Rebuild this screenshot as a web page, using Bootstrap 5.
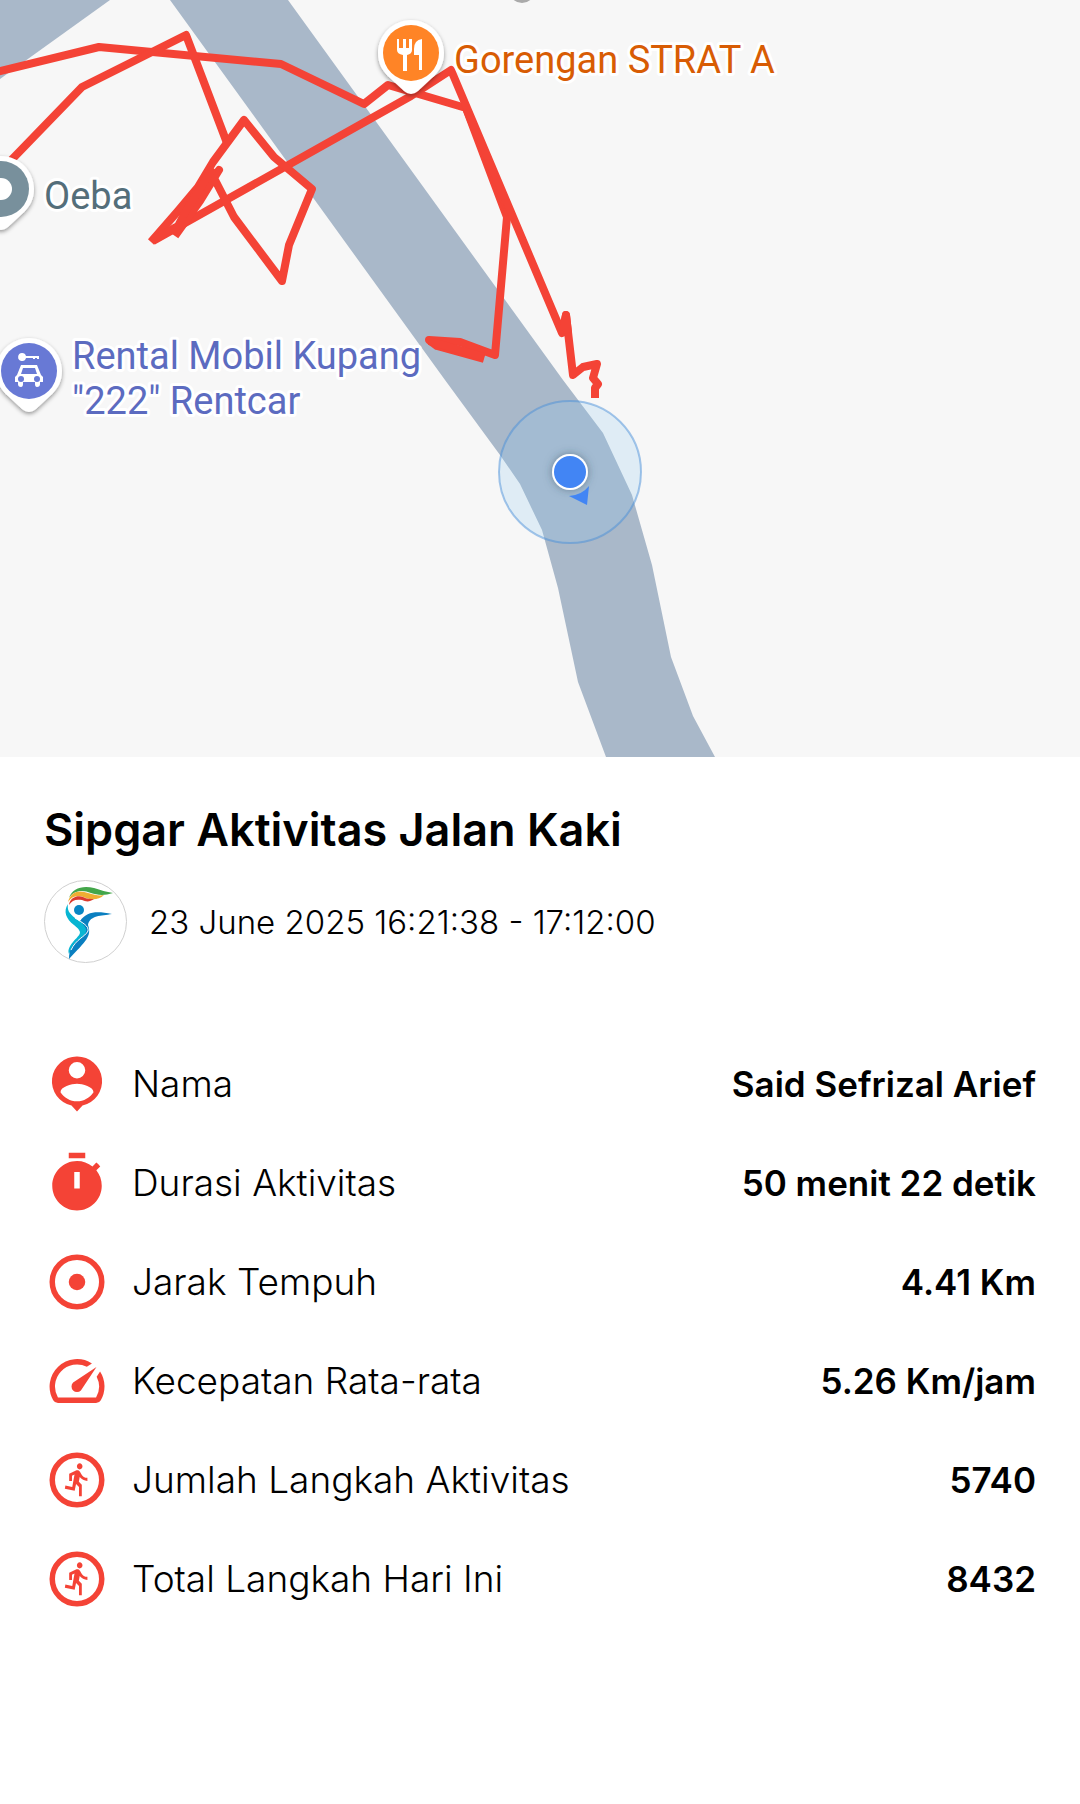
<!DOCTYPE html>
<html lang="id">
<head>
<meta charset="utf-8">
<meta name="viewport" content="width=device-width, initial-scale=1">
<title>Sipgar Aktivitas Jalan Kaki</title>
<link href="https://cdn.jsdelivr.net/npm/bootstrap@5.3.0/dist/css/bootstrap.min.css" rel="stylesheet">
<style>
  body { font-family: Inter, "Open Sans", sans-serif; color: #000; background: #fff; }
  .route-map { background: #f7f7f7; }
  .map-label { font-family: Roboto, sans-serif; font-size: 38px; paint-order: stroke; stroke: #fff; stroke-width: 6px; stroke-linejoin: round; }
  .activity { padding: 48px 44px; }
  .activity-title { font-size: 45px; line-height: 50px; font-weight: 600; margin-bottom: 25px; }
  .activity-meta { gap: 22px; margin-bottom: 88px; font-size: 33px; line-height: 40px; font-weight: 300; }
  .club-logo { width: 83px; height: 83px; }
  .stats { gap: 33px; }
  .stat-line { gap: 22px; font-size: 37px; line-height: 44px; }
  .stat-line dt { font-weight: 300; }
  .stat-line dd { font-size: 35px; font-weight: 600; }
  .stat-icon { width: 66px; height: 66px; fill: #f44336; }
</style>
<script src="https://cdn.jsdelivr.net/npm/bootstrap@5.3.0/dist/js/bootstrap.bundle.min.js" defer></script>
</head>
<body>
<svg class="route-map d-block w-100" viewBox="0 0 1080 757" role="img" aria-label="Peta rute jalan kaki">
  <defs>
    <filter id="pinShadow" x="-30%" y="-30%" width="160%" height="160%"><feDropShadow dx="0" dy="2" stdDeviation="2" flood-color="#000" flood-opacity=".4"/></filter>
    <filter id="dotShadow" x="-50%" y="-50%" width="200%" height="200%"><feDropShadow dx="0" dy="0" stdDeviation="4" flood-color="#345" flood-opacity=".5"/></filter>
    <path id="pin" d="M0-33C-18-33-33-18-33 0C-33 11-28 19-21 25L-7 38Q0 44 7 38L21 25C28 19 33 11 33 0C33-18 18-33 0-33z"/>
  </defs>
  <g fill="#a9b8c9">
    <path d="M0 0H110L0 79z"/>
    <path d="M170 0L445 380L500 455L520 484L542 530L558 588L578 682L606 757H715L693 716L671 657L652 565L632 495L603 433L563 380L288 0z"/>
  </g>
  <g fill="none" stroke="#f44336" stroke-width="8" stroke-linejoin="round">
    <path d="M-4 72L99 47L281 64L364 104L388 85L466 108L507 217L495 355L460 342L429 340L437 346L484 359"/>
    <path d="M466 108L510 215"/>
    <path d="M429 341L484 357"/>
    <path d="M-4 176L82 87L186 35L227 143"/>
    <path d="M153 241L411 96L451 70L562 333L566 315L573 375L583 367L597 364L593 378L598 384L595 388L595 398"/>
    <path d="M151 242L178 211L198 187L213 162L244 120L274 157L312 189L289 245L282 281L234 217L214 178L219 170L200 201L175 236"/>
    <path d="M153 240L178 226L196 192L215 172"/>
    <path d="M183 216L213 168"/>
    <path d="M563 331L566 315L568 333"/>
  </g>
  <circle cx="522" cy="-10" r="13" fill="#aaa"/>
  <g transform="translate(411 53)">
    <use href="#pin" fill="#fff" filter="url(#pinShadow)"/>
    <circle r="28" fill="#ff8426"/>
    <path fill="#fff" d="M-14-14h2v9h4v-9h3v9h3v-9h3v11q0 4-5 5v16h-4V2q-6-1-6-5zM11-14V17H8V2H3V-4Q3-13 11-14z"/>
  </g>
  <g transform="translate(1 189)">
    <use href="#pin" fill="#fff" filter="url(#pinShadow)"/>
    <circle r="28" fill="#78909c"/><circle r="11" fill="#fff"/>
  </g>
  <g transform="translate(29 371)">
    <use href="#pin" fill="#fff" filter="url(#pinShadow)"/>
    <circle r="28" fill="#6879d5"/>
    <path fill="#fff" d="M-8-6H8L12 4L14 6V11H11V13Q11 16 8 16Q6 16 6 13V11H-6V13Q-6 16-8 16Q-11 16-11 13V11H-14V6L-12 4zM-6-3L-8 3H8L6-3z" fill-rule="evenodd"/>
    <circle cx="-8" cy="8" r="3" fill="#6879d5"/><circle cx="8" cy="8" r="3" fill="#6879d5"/>
    <path fill="#fff" d="M-7-18a4 4 0 0 1 4 3H10v3H8v-1H6v1H4v-1H-3a4 4 0 1 1-4-5z"/>
  </g>
  <text class="map-label" x="454" y="73" fill="#d85c04">Gorengan STRAT A</text>
  <text class="map-label" x="44" y="209" fill="#546e7a">Oeba</text>
  <text class="map-label" fill="#5c6bc0"><tspan x="72" y="369">Rental Mobil Kupang</tspan><tspan x="72" y="414">"222" Rentcar</tspan></text>
  <circle cx="570" cy="472" r="71" fill="#8dcaf2" fill-opacity=".22" stroke="#4a90d9" stroke-opacity=".5" stroke-width="2"/>
  <circle cx="570" cy="472" r="18" fill="#fff" filter="url(#dotShadow)"/>
  <circle cx="570" cy="472" r="16" fill="#4285f4"/>
  <path d="M569 496Q582 495 589 486L587 505z" fill="#4285f4"/>
</svg>

<main class="activity">
  <h1 class="activity-title">Sipgar Aktivitas Jalan Kaki</h1>
  <div class="activity-meta d-flex align-items-center">
    <svg class="club-logo flex-shrink-0" viewBox="0 0 83 83" aria-hidden="true">
      <circle cx="41.500" cy="41.500" r="41" fill="#fff" stroke="#d0d0d0" stroke-width="1"/>
      <path fill="#43a64a" d="M25 18C28 8 39 5 50 8C57 10 62 12 69 13C60 16 53 15 47 13C38 9 29 11 25 18z"/>
      <path fill="#efae32" d="M24 22C27 11 36 10 44 13C51 15 55 16 60 15C55 20 48 20 42 18C34 14 28 16 24 22z"/>
      <path fill="#dc3a2d" d="M25 25C26 17 34 15 39 17C43 19 46 19 50 19C46 22 42 22 38 20C32 19 28 20 25 25z"/>
      <path fill="#08b5d2" d="M24 24C19 31 22 39 30 45C40 53 36 54 29 62C24 68 24 71 25 74C29 64 38 59 44 53C46 47 38 43 31 38C25 33 23 30 24 24z"/>
      <circle cx="35" cy="30" r="5" fill="#0786c4"/>
      <path fill="#0a7fc0" d="M36 41C43 31 53 31 68 34C57 36 46 35 44 45C48 56 42 61 25 79C25 70 28 64 37 58C44 52 44 49 36 41z"/>
      <path fill="none" stroke="#fff" stroke-width="1" d="M31 38C39 43 45 46 44 51C41 57 32 59 27 70"/>
    </svg>
    <span>23 June 2025 16:21:38 - 17:12:00</span>
  </div>

  <dl class="stats d-flex flex-column mb-0">
    <div class="stat-line d-flex align-items-center">
      <svg class="stat-icon flex-shrink-0" viewBox="0 0 24 24" aria-hidden="true"><path fill-rule="evenodd" d="M12 2a9 9 0 0 0-2 17.800L12 22l2-2.200A9 9 0 0 0 12 2zM12 4a3 3 0 1 1 0 6a3 3 0 1 1 0-6zM12 18.300c-2.500 0-4.700-1.300-6-3.300c0-2 4-3.100 6-3.100s6 1.100 6 3.100c-1.300 2-3.500 3.300-6 3.300z"/></svg>
      <dt>Nama</dt><dd class="ms-auto mb-0 text-end">Said Sefrizal Arief</dd>
    </div>
    <div class="stat-line d-flex align-items-center">
      <svg class="stat-icon flex-shrink-0" viewBox="0 0 24 24" aria-hidden="true"><path fill-rule="evenodd" d="M15 1H9v2h6V1zm-4 13h2V8h-2v6zm8.030-6.610l1.420-1.420c-.43-.51-.9-.99-1.410-1.410l-1.420 1.420C16.070 4.740 14.120 4 12 4c-4.970 0-9 4.030-9 9s4.020 9 9 9 9-4.030 9-9c0-2.120-.74-4.070-1.970-5.610z"/></svg>
      <dt>Durasi Aktivitas</dt><dd class="ms-auto mb-0 text-end">50 menit 22 detik</dd>
    </div>
    <div class="stat-line d-flex align-items-center">
      <svg class="stat-icon flex-shrink-0" viewBox="0 0 24 24" aria-hidden="true"><circle cx="12" cy="12" r="9" fill="none" stroke="#f44336" stroke-width="2"/><circle cx="12" cy="12" r="3"/></svg>
      <dt>Jarak Tempuh</dt><dd class="ms-auto mb-0 text-end">4.41 Km</dd>
    </div>
    <div class="stat-line d-flex align-items-center">
      <svg class="stat-icon flex-shrink-0" viewBox="0 0 24 24" aria-hidden="true"><path d="m20.380 8.570-1.230 1.850a8 8 0 0 1-.22 7.580H5.070A8 8 0 0 1 15.580 6.850l1.850-1.230A10 10 0 0 0 3.350 19a2 2 0 0 0 1.720 1h13.850a2 2 0 0 0 1.740-1 10 10 0 0 0-.27-10.440zm-9.790 6.840a2 2 0 0 0 2.830 0l5.660-8.490-8.490 5.660a2 2 0 0 0 0 2.830z"/></svg>
      <dt>Kecepatan Rata-rata</dt><dd class="ms-auto mb-0 text-end">5.26 Km/jam</dd>
    </div>
    <div class="stat-line d-flex align-items-center">
      <svg class="stat-icon flex-shrink-0" viewBox="0 0 24 24" aria-hidden="true"><g id="runner"><circle cx="12" cy="12" r="9" fill="none" stroke="#f44336" stroke-width="2"/><path transform="translate(6.100 5.070) scale(.51 .56)" d="M13.490 5.480c1.100 0 2-.9 2-2s-.9-2-2-2-2 .9-2 2 .9 2 2 2zm-3.600 13.900l1-4.400 2.100 2v6h2v-7.500l-2.100-2 .6-3c1.300 1.500 3.300 2.500 5.500 2.500v-2c-1.900 0-3.500-1-4.300-2.400l-1-1.600c-.4-.6-1-1-1.700-1-.3 0-.5.1-.8.1l-5.200 2.200v4.700h2v-3.400l1.800-.7-1.600 8.100-4.900-1-.4 2 7 1.400z"/></g></svg>
      <dt>Jumlah Langkah Aktivitas</dt><dd class="ms-auto mb-0 text-end">5740</dd>
    </div>
    <div class="stat-line d-flex align-items-center">
      <svg class="stat-icon flex-shrink-0" viewBox="0 0 24 24" aria-hidden="true"><use href="#runner"/></svg>
      <dt>Total Langkah Hari Ini</dt><dd class="ms-auto mb-0 text-end">8432</dd>
    </div>
  </dl>
</main>
</body>
</html>
